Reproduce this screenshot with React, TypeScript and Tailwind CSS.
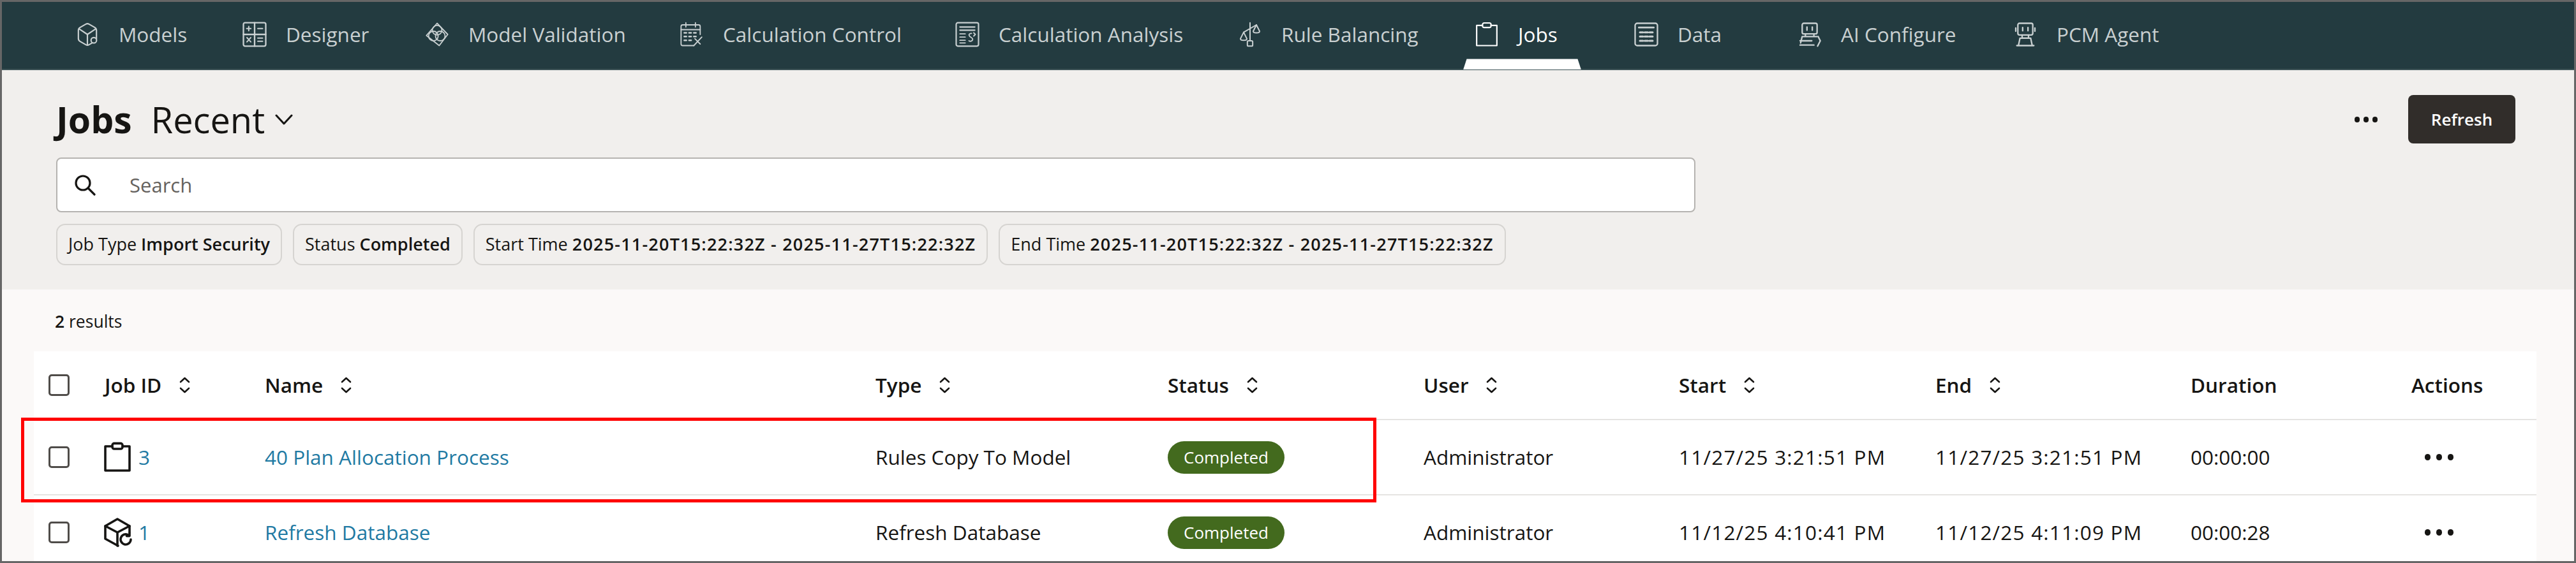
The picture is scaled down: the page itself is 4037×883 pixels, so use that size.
import React from 'react';

const fontFamily = 'font-["Open_Sans",sans-serif]';
const gridCols = 'grid grid-cols-[88px_251px_957px_458px_401px_400px_402px_400px_346px_196px]';

type IconProps = { className?: string };

const Svg = ({ className, children, sw = 1.3 }: IconProps & { children: React.ReactNode; sw?: number }) => (
  <svg viewBox="0 0 24 24" fill="none" stroke="currentColor" strokeWidth={sw} strokeLinecap="round" strokeLinejoin="round" className={className}>
    {children}
  </svg>
);

const ModelsIcon = ({ className }: IconProps) => (
  <Svg className={className}>
    <path d="M10.500 2.300a3 3 0 0 1 3 0l5.500 3.200a3 3 0 0 1 1.500 2.600v7.800a3 3 0 0 1-1.500 2.600l-5.500 3.200a3 3 0 0 1-3 0L5 18.500a3 3 0 0 1-1.500-2.600V8.100A3 3 0 0 1 5 5.500z" />
    <path d="M4.500 7l7.500 5 7.500-5M12 12v10" />
    <circle cx="18" cy="17.500" r="2.600" fill="#233b40" />
  </Svg>
);

const DesignerIcon = ({ className }: IconProps) => (
  <Svg className={className} sw={1.4}>
    <rect x="1.500" y="1" width="21" height="22" rx="1.500" />
    <path d="M12 1v22M1.500 12h21" />
    <path d="M4.500 6.500h4M6.500 4.500v4M15 6.500h4.500M4.800 15l3.600 4M8.400 15l-3.600 4M15 15.500h4.500M15 18.500h4.500" strokeWidth="1.200" />
  </Svg>
);

const ValidationIcon = ({ className }: IconProps) => (
  <Svg className={className} sw={1.1}>
    <path d="M12 1.500 22 12 14 22.500 2 13z" />
    <circle cx="12" cy="8" r="4.500" />
    <circle cx="8.500" cy="13.500" r="4.500" />
    <circle cx="15" cy="13.500" r="4.500" />
  </Svg>
);

const CalendarIcon = ({ className }: IconProps) => (
  <Svg className={className} sw={1.1}>
    <path d="M14 22.500H3.500A1.500 1.500 0 0 1 2 21V4.500A1.500 1.500 0 0 1 3.500 3h15A1.500 1.500 0 0 1 20 4.500V12" />
    <path d="M6.500 1v4M15.500 1v4M2 7.500h18" />
    <path d="M5 10.500h2M9.500 10.500h2M14 10.500h2M5 14h2M9.500 14h2M14 14h2M5 17.500h2M9.500 17.500h2" strokeWidth="1.500" />
    <path d="M14 22.500l7.500-8M15 16l5 5" />
  </Svg>
);

const AnalysisIcon = ({ className }: IconProps) => (
  <Svg className={className} sw={1.3}>
    <rect x="1.500" y="1" width="21" height="22" rx="1.500" />
    <path d="M5 5h14M5 8h14" />
    <path d="M5 11.500h5M5 14.500h5M5 17.500h5M5 20h5" strokeWidth="1.100" />
    <path d="M16 11c-2 0-3 1-2 2.500s3 1.500 3 3-2 2.500-3.500 1.500M18 10.500l1.500 1.500-1.500 1.500" strokeWidth="1.100" />
  </Svg>
);

const ScaleIcon = ({ className }: IconProps) => (
  <Svg className={className} sw={1.2}>
    <path d="M12 1v17M6 10l12-7" />
    <path d="M6 10l-3 6c0 2 6 2 6 0zM18 3l-3 6c0 2 6 2 6 0z" />
    <rect x="9.500" y="18" width="5" height="5" rx="1" />
  </Svg>
);

const ClipboardIcon = ({ className, sw = 1.300 }: IconProps & { sw?: number }) => (
  <Svg className={className} sw={sw}>
    <path d="M8 3.500H2.500v19h19v-19H16" />
    <rect x="8" y="1.200" width="8" height="4.300" rx="1.500" />
  </Svg>
);

const DataIcon = ({ className }: IconProps) => (
  <Svg className={className} sw={1.4}>
    <rect x="1.500" y="1.500" width="21" height="21" rx="2" />
    <path d="M5 5.500h14" strokeWidth="1.600" />
    <path d="M6 10h3M10.500 10h3M15 10h3M6 14h3M10.500 14h3M15 14h3M6 18h3M10.500 18h3M15 18h3" strokeWidth="1.800" />
  </Svg>
);

const RobotIcon = ({ className }: IconProps) => (
  <Svg className={className} sw={1.4}>
    <rect x="5" y="1.500" width="14" height="11" rx="1.500" />
    <path d="M9.500 5.500v3M14.500 5.500v3M3 6v3M21 6v3" />
    <path d="M9 12.500v3h6v-3" />
    <path d="M5.500 22.500l1.500-7h10l1.500 7zM4 22.500h16" />
  </Svg>
);

const ConfigureIcon = ({ className }: IconProps) => (
  <Svg className={className} sw={1.4}>
    <rect x="5" y="1.500" width="14" height="10" rx="1.500" />
    <path d="M9.500 5v3M14.500 5v3" />
    <path d="M8 11.500v2.500h8v-2.500M3.500 20l1.500-6h14" />
    <path d="M3 18h11M3 22h13M20 14l2 4-2.500 5" />
  </Svg>
);

const CubeRefreshIcon = ({ className }: IconProps) => (
  <Svg className={className} sw={1.800}>
    <path d="M12.500 22.500 2.500 17V7L12 1.500 21.500 7v5" />
    <path d="M2.500 7l9.500 5 9.500-5M12 12v10.500" />
    <path d="M22.500 17.500a4 4 0 1 1-1.300-3" />
    <path d="M21.500 12.500v2.300h-2.300" />
  </Svg>
);

const SortIcon = () => (
  <svg viewBox="0 0 21 26" fill="none" stroke="currentColor" strokeWidth="2.600" strokeLinecap="round" strokeLinejoin="round" className="w-[21px] h-[26px] text-[#161513]">
    <path d="M4 8l6.500-6 6.500 6M4 18l6.500 6 6.500-6" />
  </svg>
);

const Dots = ({ big }: { big?: boolean }) => (
  <div className={big ? 'flex gap-[9px]' : 'flex gap-[6px]'}>
    <span className={big ? 'w-[9px] h-[10px] rounded-full bg-[#161513]' : 'w-[8px] h-[9px] rounded-full bg-[#161513]'} />
    <span className={big ? 'w-[9px] h-[10px] rounded-full bg-[#161513]' : 'w-[8px] h-[9px] rounded-full bg-[#161513]'} />
    <span className={big ? 'w-[9px] h-[10px] rounded-full bg-[#161513]' : 'w-[8px] h-[9px] rounded-full bg-[#161513]'} />
  </div>
);

const navItems = [
  { label: 'Models', icon: ModelsIcon, width: 'w-[262px]' },
  { label: 'Designer', icon: DesignerIcon, width: 'w-[286px]' },
  { label: 'Model Validation', icon: ValidationIcon, width: 'w-[399px]' },
  { label: 'Calculation Control', icon: CalendarIcon, width: 'w-[432px]' },
  { label: 'Calculation Analysis', icon: AnalysisIcon, width: 'w-[443px]' },
  { label: 'Rule Balancing', icon: ScaleIcon, width: 'w-[371px]' },
  { label: 'Jobs', icon: ClipboardIcon, width: 'w-[250px]', active: true },
  { label: 'Data', icon: DataIcon, width: 'w-[256px]' },
  { label: 'AI Configure', icon: ConfigureIcon, width: 'w-[338px]' },
  { label: 'PCM Agent', icon: RobotIcon, width: 'w-[260px]' },
];

const chips = [
  { name: 'Job Type', value: 'Import Security', spaced: false },
  { name: 'Status', value: 'Completed', spaced: false },
  { name: 'Start Time', value: '2025-11-20T15:22:32Z - 2025-11-27T15:22:32Z', spaced: true },
  { name: 'End Time', value: '2025-11-20T15:22:32Z - 2025-11-27T15:22:32Z', spaced: true },
];

const headers = [
  { label: 'Job ID', sort: true },
  { label: 'Name', sort: true },
  { label: 'Type', sort: true },
  { label: 'Status', sort: true },
  { label: 'User', sort: true },
  { label: 'Start', sort: true },
  { label: 'End', sort: true },
  { label: 'Duration', sort: false },
  { label: 'Actions', sort: false },
];

const rows = [
  { id: '3', icon: 'job', name: '40 Plan Allocation Process', type: 'Rules Copy To Model', start: '11/27/25 3:21:51 PM', end: '11/27/25 3:21:51 PM', duration: '00:00:00' },
  { id: '1', icon: 'db', name: 'Refresh Database', type: 'Refresh Database', start: '11/12/25 4:10:41 PM', end: '11/12/25 4:11:09 PM', duration: '00:00:28' },
];

const Checkbox = () => (
  <span className="block w-[33px] h-[34px] rounded-[5px] border-[3px] border-[#4f4c49] bg-white" />
);

export default function App() {
  return (
    <div className={`${fontFamily} w-[4037px] h-[883px] overflow-hidden border-[3px] border-[#666666] bg-[#fbf9f8] text-[#161513]`}>
      {/* top nav */}
      <nav className="h-[107px] bg-[#233b40] border-b-2 border-[#3d5357] pl-[116px] pb-[3px] flex items-center text-[31.500px] text-[#c9d0d1]">
        {navItems.map((item) => {
          const Icon = item.icon;
          return (
            <div key={item.label} className={`${item.width} relative flex items-center gap-[31px] shrink-0 ${item.active ? 'text-white' : ''}`}>
              <Icon className="w-[40px] h-[40px] -mx-[2px] shrink-0" />
              <span>{item.label}</span>
              {item.active && (
                <span className="absolute left-[-19px] top-[62px] w-[185px] h-[17px] bg-white [clip-path:polygon(3%_0,97%_0,100%_100%,0_100%)]" />
              )}
            </div>
          );
        })}
      </nav>

      {/* page header */}
      <header className="h-[344px] bg-[#f1efed] pl-[85px] pr-[92px] pt-[39px]">
        <div className="h-[76px] flex items-center justify-between">
          <div className="flex items-center">
            <h1 className="text-[57px] font-bold leading-none">Jobs</h1>
            <span className="ml-[30px] text-[56px] leading-none">Recent</span>
            <svg viewBox="0 0 28 17" fill="none" stroke="currentColor" strokeWidth="3" strokeLinecap="round" strokeLinejoin="round" className="ml-[16px] w-[28px] h-[17px]">
              <path d="M2 2l12 13L26 2" />
            </svg>
          </div>
          <div className="flex items-center gap-[48px]">
            <Dots />
            <button className="w-[168px] h-[76px] rounded-[8px] bg-[#312d2a] text-white text-[26px] font-semibold">Refresh</button>
          </div>
        </div>
        <div className="mt-[22px] w-[2569px] h-[86px] flex items-center rounded-[8px] border-2 border-[#b5b3b0] bg-white pl-[26px] text-[31px] text-[#65625e]">
          <svg viewBox="0 0 34 34" fill="none" stroke="#161513" strokeWidth="3.200" strokeLinecap="round" className="w-[34px] h-[34px]">
            <circle cx="14" cy="14" r="11" />
            <path d="M22 22l10 10" />
          </svg>
          <span className="ml-[53px]">Search</span>
        </div>
        <div className="mt-[18px] flex gap-[17px]">
          {chips.map((chip) => (
            <div key={chip.name} className="h-[65px] px-[17px] flex items-center gap-[7px] rounded-[14px] border-2 border-[#d6d4d1] text-[27px] whitespace-nowrap">
              <span>{chip.name}</span>
              <span className={chip.spaced ? 'font-semibold tracking-[1.200px]' : 'font-semibold'}>{chip.value}</span>
            </div>
          ))}
        </div>
      </header>

      {/* results */}
      <section className="pt-[30px]">
        <p className="pl-[83px] h-[40px] leading-[40px] text-[26.500px]">
          <span className="font-semibold">2</span> results
        </p>
        <div className="relative mt-[27px] ml-[50px] w-[3922px] bg-white pl-[23px]">
          <div className={`${gridCols} h-[108px] items-center border-b-2 border-[#e5e4e2] -ml-[23px] pl-[23px] text-[31.500px] font-semibold`}>
            <Checkbox />
            {headers.map((h) => (
              <div key={h.label} className="flex items-center gap-[26px]">
                <span>{h.label}</span>
                {h.sort && <SortIcon />}
              </div>
            ))}
          </div>
          {rows.map((row) => (
            <div key={row.id} className={`${gridCols} h-[118px] shrink-0 items-center border-b-2 border-[#e5e4e2] -ml-[23px] pl-[23px] text-[31.500px]`}>
              <Checkbox />
              <div className="flex items-center gap-[9px] -ml-[4px]">
                {row.icon === 'job' ? <ClipboardIcon className="w-[48px] h-[48px] text-[#161513]" sw={1.800} /> : <CubeRefreshIcon className="w-[48px] h-[48px] text-[#161513]" />}
                <a className="text-[#1f7aa3]">{row.id}</a>
              </div>
              <a className="text-[#1f7aa3]">{row.name}</a>
              <span>{row.type}</span>
              <span className="w-[183px] h-[51px] flex items-center justify-center rounded-full bg-[#436a1e] text-white text-[26px]">Completed</span>
              <span>Administrator</span>
              <span className="tracking-[1.200px]">{row.start}</span>
              <span className="tracking-[1.200px]">{row.end}</span>
              <span>{row.duration}</span>
              <div className="pl-[21px]"><Dots big /></div>
            </div>
          ))}
          {/* highlight box drawn over the first row */}
          <div className="absolute left-[-20px] top-[104px] w-[2124px] h-[133px] border-[5px] border-[#ff0000]" />
        </div>
      </section>
    </div>
  );
}
